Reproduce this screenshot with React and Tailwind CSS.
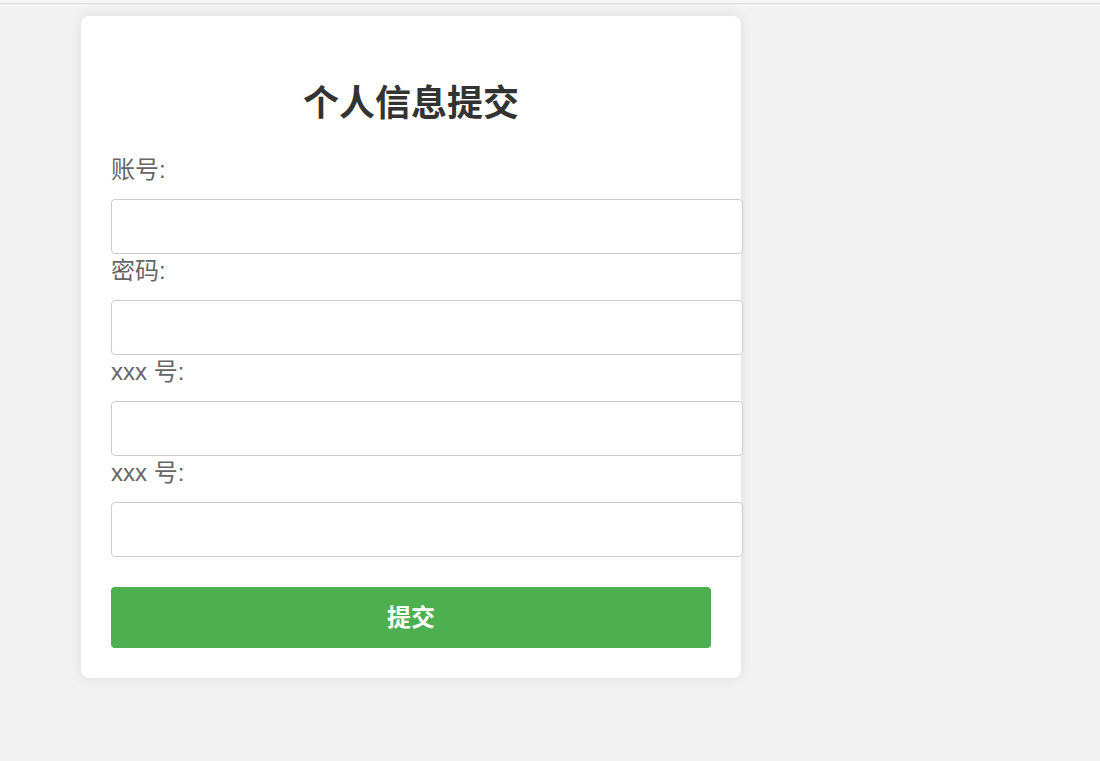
import React from "react";

const labels = ["账号:", "密码:", "xxx 号:", "xxx 号:"];

export default function App() {
  return (
    <div
      className="min-h-[761px] bg-[#f2f2f2]"
      style={{ fontFamily: '"Liberation Sans", "Noto Sans CJK SC", sans-serif' }}
    >
      <div className="h-[4px] bg-[#f5f5f5] border-b border-[#dcdcdc]" />
      <div className="ml-[81px] mt-[12px] w-[660px] bg-white rounded-lg shadow-[0_0_14px_rgba(0,0,0,0.09)] p-[30px]">
        <h2 className="mt-[38px] mb-[29px] text-center text-[36px] leading-[40px] font-bold text-[#333]">
          个人信息提交
        </h2>
        {labels.map((l, i) => (
          <div key={i}>
            <label className="block text-[24px] leading-[34px] mb-3 text-[#666]">{l}</label>
            <input
              type="text"
              className="block w-[632px] h-[55px] border border-[#ccc] rounded bg-white px-[15px] outline-none"
            />
          </div>
        ))}
        <button className="mt-[30px] w-[600px] h-[61px] bg-[#4caf50] text-white text-[24px] font-bold rounded">
          提交
        </button>
      </div>
    </div>
  );
}
